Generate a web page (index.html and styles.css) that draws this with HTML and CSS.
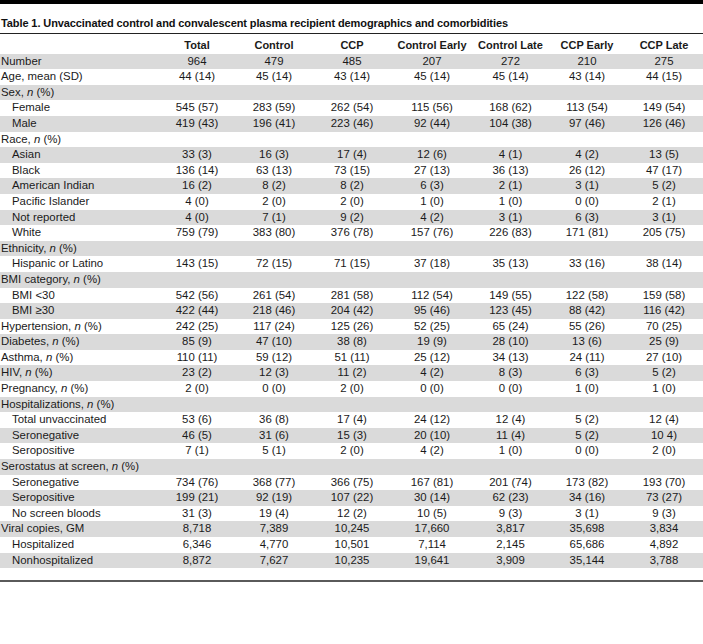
FILE: index.html
```html
<!DOCTYPE html>
<html>
<head>
<meta charset="utf-8">
<link rel="stylesheet" href="styles.css">
</head>
<body>
<div class="topbar"></div>
<h1 class="title">Table 1. Unvaccinated control and convalescent plasma recipient demographics and comorbidities</h1>
<table class="data">
<colgroup>
<col class="c-label"><col class="c1"><col class="c2"><col class="c3"><col class="c4"><col class="c5"><col class="c6"><col class="c7">
</colgroup>
<thead>
<tr><th></th><th>Total</th><th>Control</th><th>CCP</th><th>Control Early</th><th>Control Late</th><th>CCP Early</th><th>CCP Late</th></tr>
</thead>
<tbody>
<tr><td>Number</td><td>964</td><td>479</td><td>485</td><td>207</td><td>272</td><td>210</td><td>275</td></tr>
<tr><td>Age, mean (SD)</td><td>44 (14)</td><td>45 (14)</td><td>43 (14)</td><td>45 (14)</td><td>45 (14)</td><td>43 (14)</td><td>44 (15)</td></tr>
<tr><td>Sex, <i>n</i> (%)</td><td></td><td></td><td></td><td></td><td></td><td></td><td></td></tr>
<tr><td class="sub">Female</td><td>545 (57)</td><td>283 (59)</td><td>262 (54)</td><td>115 (56)</td><td>168 (62)</td><td>113 (54)</td><td>149 (54)</td></tr>
<tr><td class="sub">Male</td><td>419 (43)</td><td>196 (41)</td><td>223 (46)</td><td>92 (44)</td><td>104 (38)</td><td>97 (46)</td><td>126 (46)</td></tr>
<tr><td>Race, <i>n</i> (%)</td><td></td><td></td><td></td><td></td><td></td><td></td><td></td></tr>
<tr><td class="sub">Asian</td><td>33 (3)</td><td>16 (3)</td><td>17 (4)</td><td>12 (6)</td><td>4 (1)</td><td>4 (2)</td><td>13 (5)</td></tr>
<tr><td class="sub">Black</td><td>136 (14)</td><td>63 (13)</td><td>73 (15)</td><td>27 (13)</td><td>36 (13)</td><td>26 (12)</td><td>47 (17)</td></tr>
<tr><td class="sub">American Indian</td><td>16 (2)</td><td>8 (2)</td><td>8 (2)</td><td>6 (3)</td><td>2 (1)</td><td>3 (1)</td><td>5 (2)</td></tr>
<tr><td class="sub">Pacific Islander</td><td>4 (0)</td><td>2 (0)</td><td>2 (0)</td><td>1 (0)</td><td>1 (0)</td><td>0 (0)</td><td>2 (1)</td></tr>
<tr><td class="sub">Not reported</td><td>4 (0)</td><td>7 (1)</td><td>9 (2)</td><td>4 (2)</td><td>3 (1)</td><td>6 (3)</td><td>3 (1)</td></tr>
<tr><td class="sub">White</td><td>759 (79)</td><td>383 (80)</td><td>376 (78)</td><td>157 (76)</td><td>226 (83)</td><td>171 (81)</td><td>205 (75)</td></tr>
<tr><td>Ethnicity, <i>n</i> (%)</td><td></td><td></td><td></td><td></td><td></td><td></td><td></td></tr>
<tr><td class="sub">Hispanic or Latino</td><td>143 (15)</td><td>72 (15)</td><td>71 (15)</td><td>37 (18)</td><td>35 (13)</td><td>33 (16)</td><td>38 (14)</td></tr>
<tr><td>BMI category, <i>n</i> (%)</td><td></td><td></td><td></td><td></td><td></td><td></td><td></td></tr>
<tr><td class="sub">BMI &lt;30</td><td>542 (56)</td><td>261 (54)</td><td>281 (58)</td><td>112 (54)</td><td>149 (55)</td><td>122 (58)</td><td>159 (58)</td></tr>
<tr><td class="sub">BMI ≥30</td><td>422 (44)</td><td>218 (46)</td><td>204 (42)</td><td>95 (46)</td><td>123 (45)</td><td>88 (42)</td><td>116 (42)</td></tr>
<tr><td>Hypertension, <i>n</i> (%)</td><td>242 (25)</td><td>117 (24)</td><td>125 (26)</td><td>52 (25)</td><td>65 (24)</td><td>55 (26)</td><td>70 (25)</td></tr>
<tr><td>Diabetes, <i>n</i> (%)</td><td>85 (9)</td><td>47 (10)</td><td>38 (8)</td><td>19 (9)</td><td>28 (10)</td><td>13 (6)</td><td>25 (9)</td></tr>
<tr><td>Asthma, <i>n</i> (%)</td><td>110 (11)</td><td>59 (12)</td><td>51 (11)</td><td>25 (12)</td><td>34 (13)</td><td>24 (11)</td><td>27 (10)</td></tr>
<tr><td>HIV, <i>n</i> (%)</td><td>23 (2)</td><td>12 (3)</td><td>11 (2)</td><td>4 (2)</td><td>8 (3)</td><td>6 (3)</td><td>5 (2)</td></tr>
<tr><td>Pregnancy, <i>n</i> (%)</td><td>2 (0)</td><td>0 (0)</td><td>2 (0)</td><td>0 (0)</td><td>0 (0)</td><td>1 (0)</td><td>1 (0)</td></tr>
<tr><td>Hospitalizations, <i>n</i> (%)</td><td></td><td></td><td></td><td></td><td></td><td></td><td></td></tr>
<tr><td class="sub">Total unvaccinated</td><td>53 (6)</td><td>36 (8)</td><td>17 (4)</td><td>24 (12)</td><td>12 (4)</td><td>5 (2)</td><td>12 (4)</td></tr>
<tr><td class="sub">Seronegative</td><td>46 (5)</td><td>31 (6)</td><td>15 (3)</td><td>20 (10)</td><td>11 (4)</td><td>5 (2)</td><td>10 4)</td></tr>
<tr><td class="sub">Seropositive</td><td>7 (1)</td><td>5 (1)</td><td>2 (0)</td><td>4 (2)</td><td>1 (0)</td><td>0 (0)</td><td>2 (0)</td></tr>
<tr><td>Serostatus at screen, <i>n</i> (%)</td><td></td><td></td><td></td><td></td><td></td><td></td><td></td></tr>
<tr><td class="sub">Seronegative</td><td>734 (76)</td><td>368 (77)</td><td>366 (75)</td><td>167 (81)</td><td>201 (74)</td><td>173 (82)</td><td>193 (70)</td></tr>
<tr><td class="sub">Seropositive</td><td>199 (21)</td><td>92 (19)</td><td>107 (22)</td><td>30 (14)</td><td>62 (23)</td><td>34 (16)</td><td>73 (27)</td></tr>
<tr><td class="sub">No screen bloods</td><td>31 (3)</td><td>19 (4)</td><td>12 (2)</td><td>10 (5)</td><td>9 (3)</td><td>3 (1)</td><td>9 (3)</td></tr>
<tr><td>Viral copies, GM</td><td>8,718</td><td>7,389</td><td>10,245</td><td>17,660</td><td>3,817</td><td>35,698</td><td>3,834</td></tr>
<tr><td class="sub">Hospitalized</td><td>6,346</td><td>4,770</td><td>10,501</td><td>7,114</td><td>2,145</td><td>65,686</td><td>4,892</td></tr>
<tr><td class="sub">Nonhospitalized</td><td>8,872</td><td>7,627</td><td>10,235</td><td>19,641</td><td>3,909</td><td>35,144</td><td>3,788</td></tr>
</tbody>
</table>
<div class="bottomrule"></div>
</body>
</html>
```

FILE: styles.css
```css
html, body {
  margin: 0;
  padding: 0;
  background: #ffffff;
}
body {
  font-family: "Liberation Sans", Arial, sans-serif;
  color: #1a1a1a;
  width: 703px;
}
.topbar {
  height: 4px;
  background: #000000;
}
.title {
  margin: 0;
  padding: 10px 0 0 1px;
  height: 19px;
  font-size: 11px;
  font-weight: bold;
  line-height: 19px;
  color: #111;
  border-bottom: 1px solid #222;
  letter-spacing: -0.1px;
}
.data {
  width: 703px;
  border-collapse: collapse;
  table-layout: fixed;
  font-size: 11.4px;
  margin-top: 4px;
}
.c-label { width: 158px; }
.c1 { width: 78px; }
.c2 { width: 76px; }
.c3 { width: 80px; }
.c4 { width: 80px; }
.c5 { width: 77px; }
.c6 { width: 76px; }
.c7 { width: 78px; }
.data th {
  font-weight: bold;
  font-size: 11px;
  text-align: center;
  height: 15.6px;
  padding: 0;
  line-height: 15.6px;
  white-space: nowrap;
}
.data td {
  text-align: center;
  height: 15.6px;
  padding: 0;
  line-height: 15.6px;
  white-space: nowrap;
}
.data td:first-child {
  text-align: left;
  padding-left: 1px;
}
.data td.sub {
  padding-left: 12px;
}
.data tbody tr:nth-child(odd) {
  background: #dadada;
}
.bottomrule {
  margin-top: 12px;
  height: 2px;
  background: #5a5a5a;
}
```
